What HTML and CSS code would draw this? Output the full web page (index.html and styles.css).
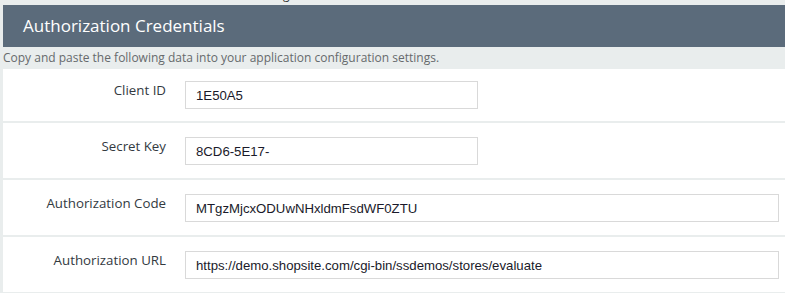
FILE: index.html
```html
<!DOCTYPE html>
<html>
<head>
<meta charset="utf-8">
<link rel="stylesheet" href="styles.css">
</head>
<body>
<div class="topclip"><div class="topclip-text">g</div></div>
<div class="panel-header">Authorization Credentials</div>
<p class="intro">Copy and paste the following data into your application configuration settings.</p>
<div class="rows">
  <div class="row">
    <div class="label">Client ID</div>
    <div class="field short">1E50A5</div>
  </div>
  <div class="row">
    <div class="label">Secret Key</div>
    <div class="field short">8CD6-5E17-</div>
  </div>
  <div class="row">
    <div class="label">Authorization Code</div>
    <div class="field long">MTgzMjcxODUwNHxldmFsdWF0ZTU</div>
  </div>
  <div class="row">
    <div class="label">Authorization URL</div>
    <div class="field long">https://demo.shopsite.com/cgi-bin/ssdemos/stores/evaluate</div>
  </div>
</div>
</body>
</html>
```

FILE: styles.css
```css
html, body {
  margin: 0;
  padding: 0;
  background: #e9eded;
  font-family: "Open Sans", "DejaVu Sans", sans-serif;
  overflow: hidden;
}
.topclip {
  height: 5px;
  overflow: hidden;
}
.topclip-text {
  margin-top: -12px;
  padding-left: 283px;
  font-size: 12px;
  line-height: 14px;
  color: #333;
}
.panel-header {
  margin-left: 3px;
  height: 42px;
  background: #5b6b7b;
  color: #ffffff;
  font-size: 17px;
  line-height: 42px;
  padding-left: 20px;
}
.intro {
  margin: 0;
  height: 22px;
  padding-left: 3px;
  font-size: 12px;
  line-height: 22px;
  color: #666a6c;
}
.rows {
  margin-left: 3px;
  display: flex;
  flex-direction: column;
  gap: 2px;
}
.row {
  background: #ffffff;
  height: 55px;
  box-sizing: border-box;
  padding-top: 14px;
  display: flex;
  align-items: flex-start;
}
.row:first-child {
  height: 52px;
  padding-top: 12px;
}
.label {
  width: 163px;
  text-align: right;
  font-size: 13.3px;
  line-height: 16px;
  padding-top: 1px;
  color: #333a3f;
  flex: none;
}
.field {
  margin-left: 19px;
  box-sizing: border-box;
  height: 28px;
  border: 1px solid #d9d9d9;
  padding: 0 10px;
  font-family: "Liberation Sans", Arial, sans-serif;
  font-size: 13.2px;
  line-height: 28px;
  color: #1a1a2a;
  white-space: nowrap;
  overflow: hidden;
}
.field.short { width: 293px; }
.field.long { width: 594px; }
```
